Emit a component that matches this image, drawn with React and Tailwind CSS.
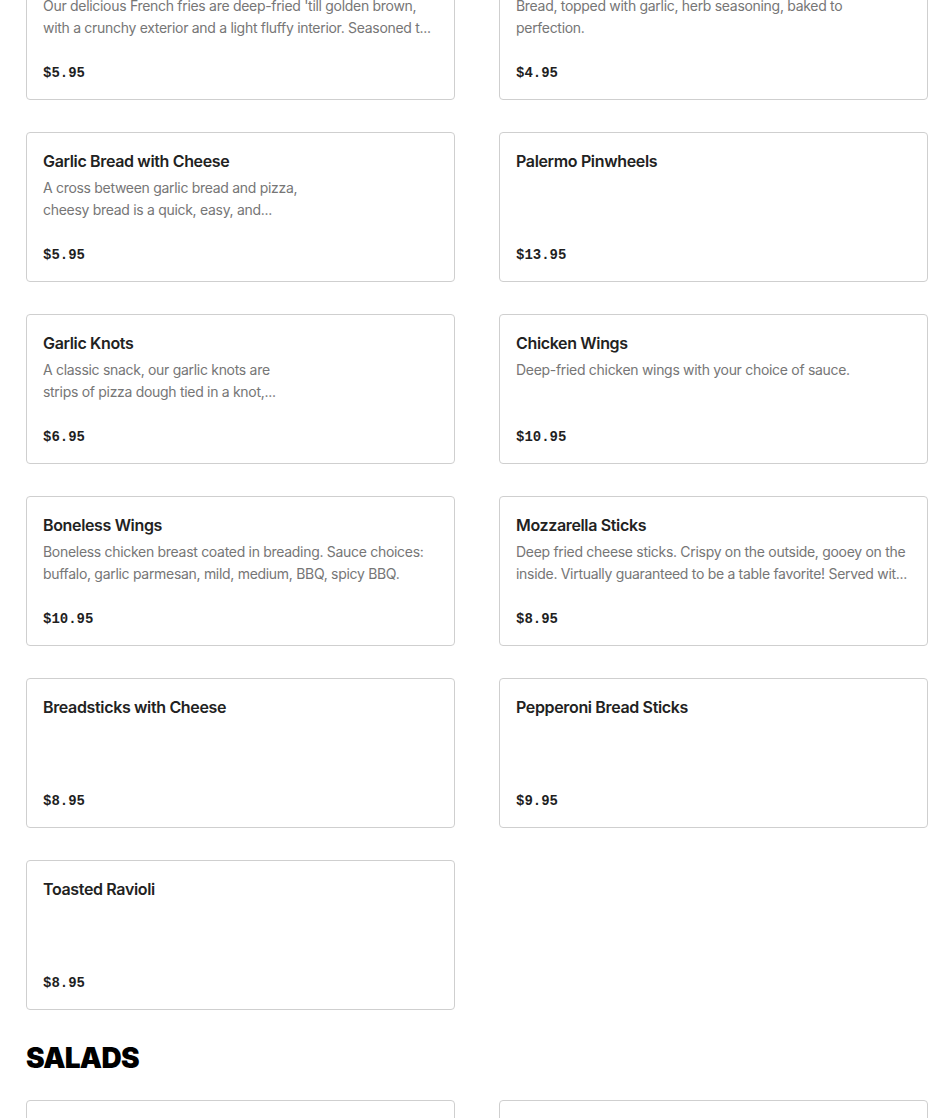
import React from "react"

const appetizers = [
    {
        name: "French Fries",
        lines: [
            "Our delicious French fries are deep-fried 'till golden brown,",
            "with a crunchy exterior and a light fluffy interior. Seasoned t...",
        ],
        price: "$5.95",
    },
    {
        name: "Garlic Bread",
        lines: ["Bread, topped with garlic, herb seasoning, baked to", "perfection."],
        price: "$4.95",
    },
    {
        name: "Garlic Bread with Cheese",
        lines: ["A cross between garlic bread and pizza,", "cheesy bread is a quick, easy, and..."],
        price: "$5.95",
    },
    { name: "Palermo Pinwheels", lines: [], price: "$13.95" },
    {
        name: "Garlic Knots",
        lines: ["A classic snack, our garlic knots are", "strips of pizza dough tied in a knot,..."],
        price: "$6.95",
    },
    {
        name: "Chicken Wings",
        lines: ["Deep-fried chicken wings with your choice of sauce."],
        price: "$10.95",
    },
    {
        name: "Boneless Wings",
        lines: [
            "Boneless chicken breast coated in breading. Sauce choices:",
            "buffalo, garlic parmesan, mild, medium, BBQ, spicy BBQ.",
        ],
        price: "$10.95",
    },
    {
        name: "Mozzarella Sticks",
        lines: [
            "Deep fried cheese sticks. Crispy on the outside, gooey on the",
            "inside. Virtually guaranteed to be a table favorite! Served wit...",
        ],
        price: "$8.95",
    },
    { name: "Breadsticks with Cheese", lines: [], price: "$8.95" },
    { name: "Pepperoni Bread Sticks", lines: [], price: "$9.95" },
    { name: "Toasted Ravioli", lines: [], price: "$8.95" },
]

function MenuCard({ item, faded }) {
    return (
        <div className="h-[150px] rounded border border-[#cfcfcf] bg-white px-4 pt-4">
            <h3 className={`text-[16px] font-semibold leading-6 tracking-[-0.35px] ${faded ? "text-[#e6e6e6]" : "text-[#222222]"}`}>
                {item.name}
            </h3>
            <div className="mt-1 h-[44px] text-[14px] leading-[22px] tracking-[-0.3px] text-[#767676]">
                {item.lines.map((line, i) => (
                    <p key={i} className="overflow-hidden whitespace-nowrap">
                        {line}
                    </p>
                ))}
            </div>
            <div className="mt-[24px] font-['Liberation_Mono',monospace] text-[14px] font-bold leading-5 text-[#1f1f1f]">
                {item.price}
            </div>
        </div>
    )
}

export default function App() {
    return (
        <div className="min-h-screen overflow-hidden bg-white font-['Inter',sans-serif]">
            <div className="-mt-[50px] ml-[26px] w-[902px]">
                <div className="grid grid-cols-2 gap-x-[44px] gap-y-[32px]">
                    {appetizers.map((item) => (
                        <MenuCard key={item.name} item={item} />
                    ))}
                </div>

                <h2 className="mt-[30px] text-[28px] font-black leading-[36px] tracking-tight text-black">
                    SALADS
                </h2>

                <div className="mt-[24px] grid grid-cols-2 gap-x-[44px] gap-y-[32px]">
                    <MenuCard item={{ name: "Side Salad", lines: [], price: "" }} faded />
                    <MenuCard item={{ name: "Garden Salad", lines: [], price: "" }} faded />
                </div>
            </div>
        </div>
    )
}
